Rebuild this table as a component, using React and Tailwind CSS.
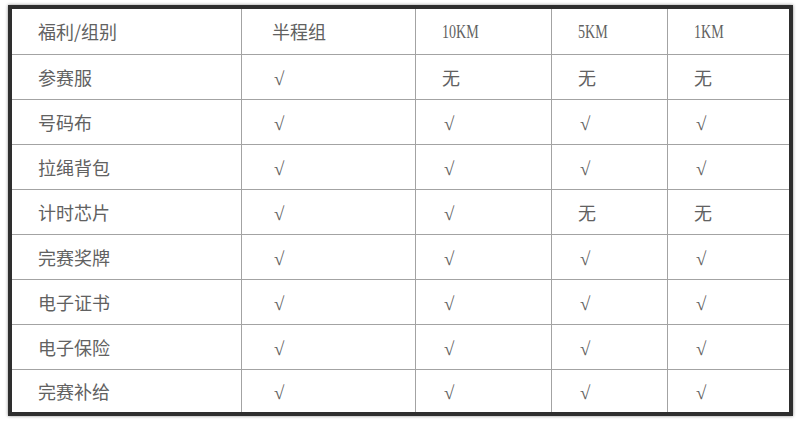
const header = ["福利/组别", "半程组", "10KM", "5KM", "1KM"];

const rows = [
  ["参赛服", "√", "无", "无", "无"],
  ["号码布", "√", "√", "√", "√"],
  ["拉绳背包", "√", "√", "√", "√"],
  ["计时芯片", "√", "√", "无", "无"],
  ["完赛奖牌", "√", "√", "√", "√"],
  ["电子证书", "√", "√", "√", "√"],
  ["电子保险", "√", "√", "√", "√"],
  ["完赛补给", "√", "√", "√", "√"],
];

const padLeft = ["pl-[26px]", "pl-[30px]", "pl-[26px]", "pl-[26px]", "pl-[26px]"];

const Cell = ({ value, col, lastCol, lastRow, latin }) => (
  <div
    className={`flex items-center ${padLeft[col]} ${lastCol ? "" : "border-r"} ${
      lastRow ? "" : "border-b"
    } border-[#a3a3a3]`}
  >
    {latin ? (
      <span className="inline-block text-[18px] scale-x-[0.78] origin-left translate-y-[1px] font-['Liberation_Serif',serif]">
        {value}
      </span>
    ) : value === "√" ? (
      <span className="inline-block text-[19px] pl-[2px] translate-y-[2px] font-['Liberation_Serif',serif]">
        {value}
      </span>
    ) : (
      <span className="text-[18px]">{value}</span>
    )}
  </div>
);

export default function App() {
  return (
    <div className="w-[800px] h-[425px] bg-white pl-[8px] pt-[5px] font-['Noto_Sans_CJK_SC',sans-serif] text-[#616161]">
      <div className="w-[785px] h-[411px] border-4 border-[#2e2e2e] shadow-[0_0_3px_rgba(0,0,0,0.45)] bg-white">
        <div className="grid grid-cols-[230px_174px_136px_116px_121px] grid-rows-[46px_45px_45px_45px_45px_45px_45px_45px_42px] h-full">
          {header.map((h, i) => (
            <Cell key={h} value={h} col={i} lastCol={i === 4} latin={i >= 2} />
          ))}
          {rows.map((r, ri) =>
            r.map((v, ci) => (
              <Cell
                key={`${ri}-${ci}`}
                value={v}
                col={ci}
                lastCol={ci === 4}
                lastRow={ri === rows.length - 1}
              />
            ))
          )}
        </div>
      </div>
    </div>
  );
}
